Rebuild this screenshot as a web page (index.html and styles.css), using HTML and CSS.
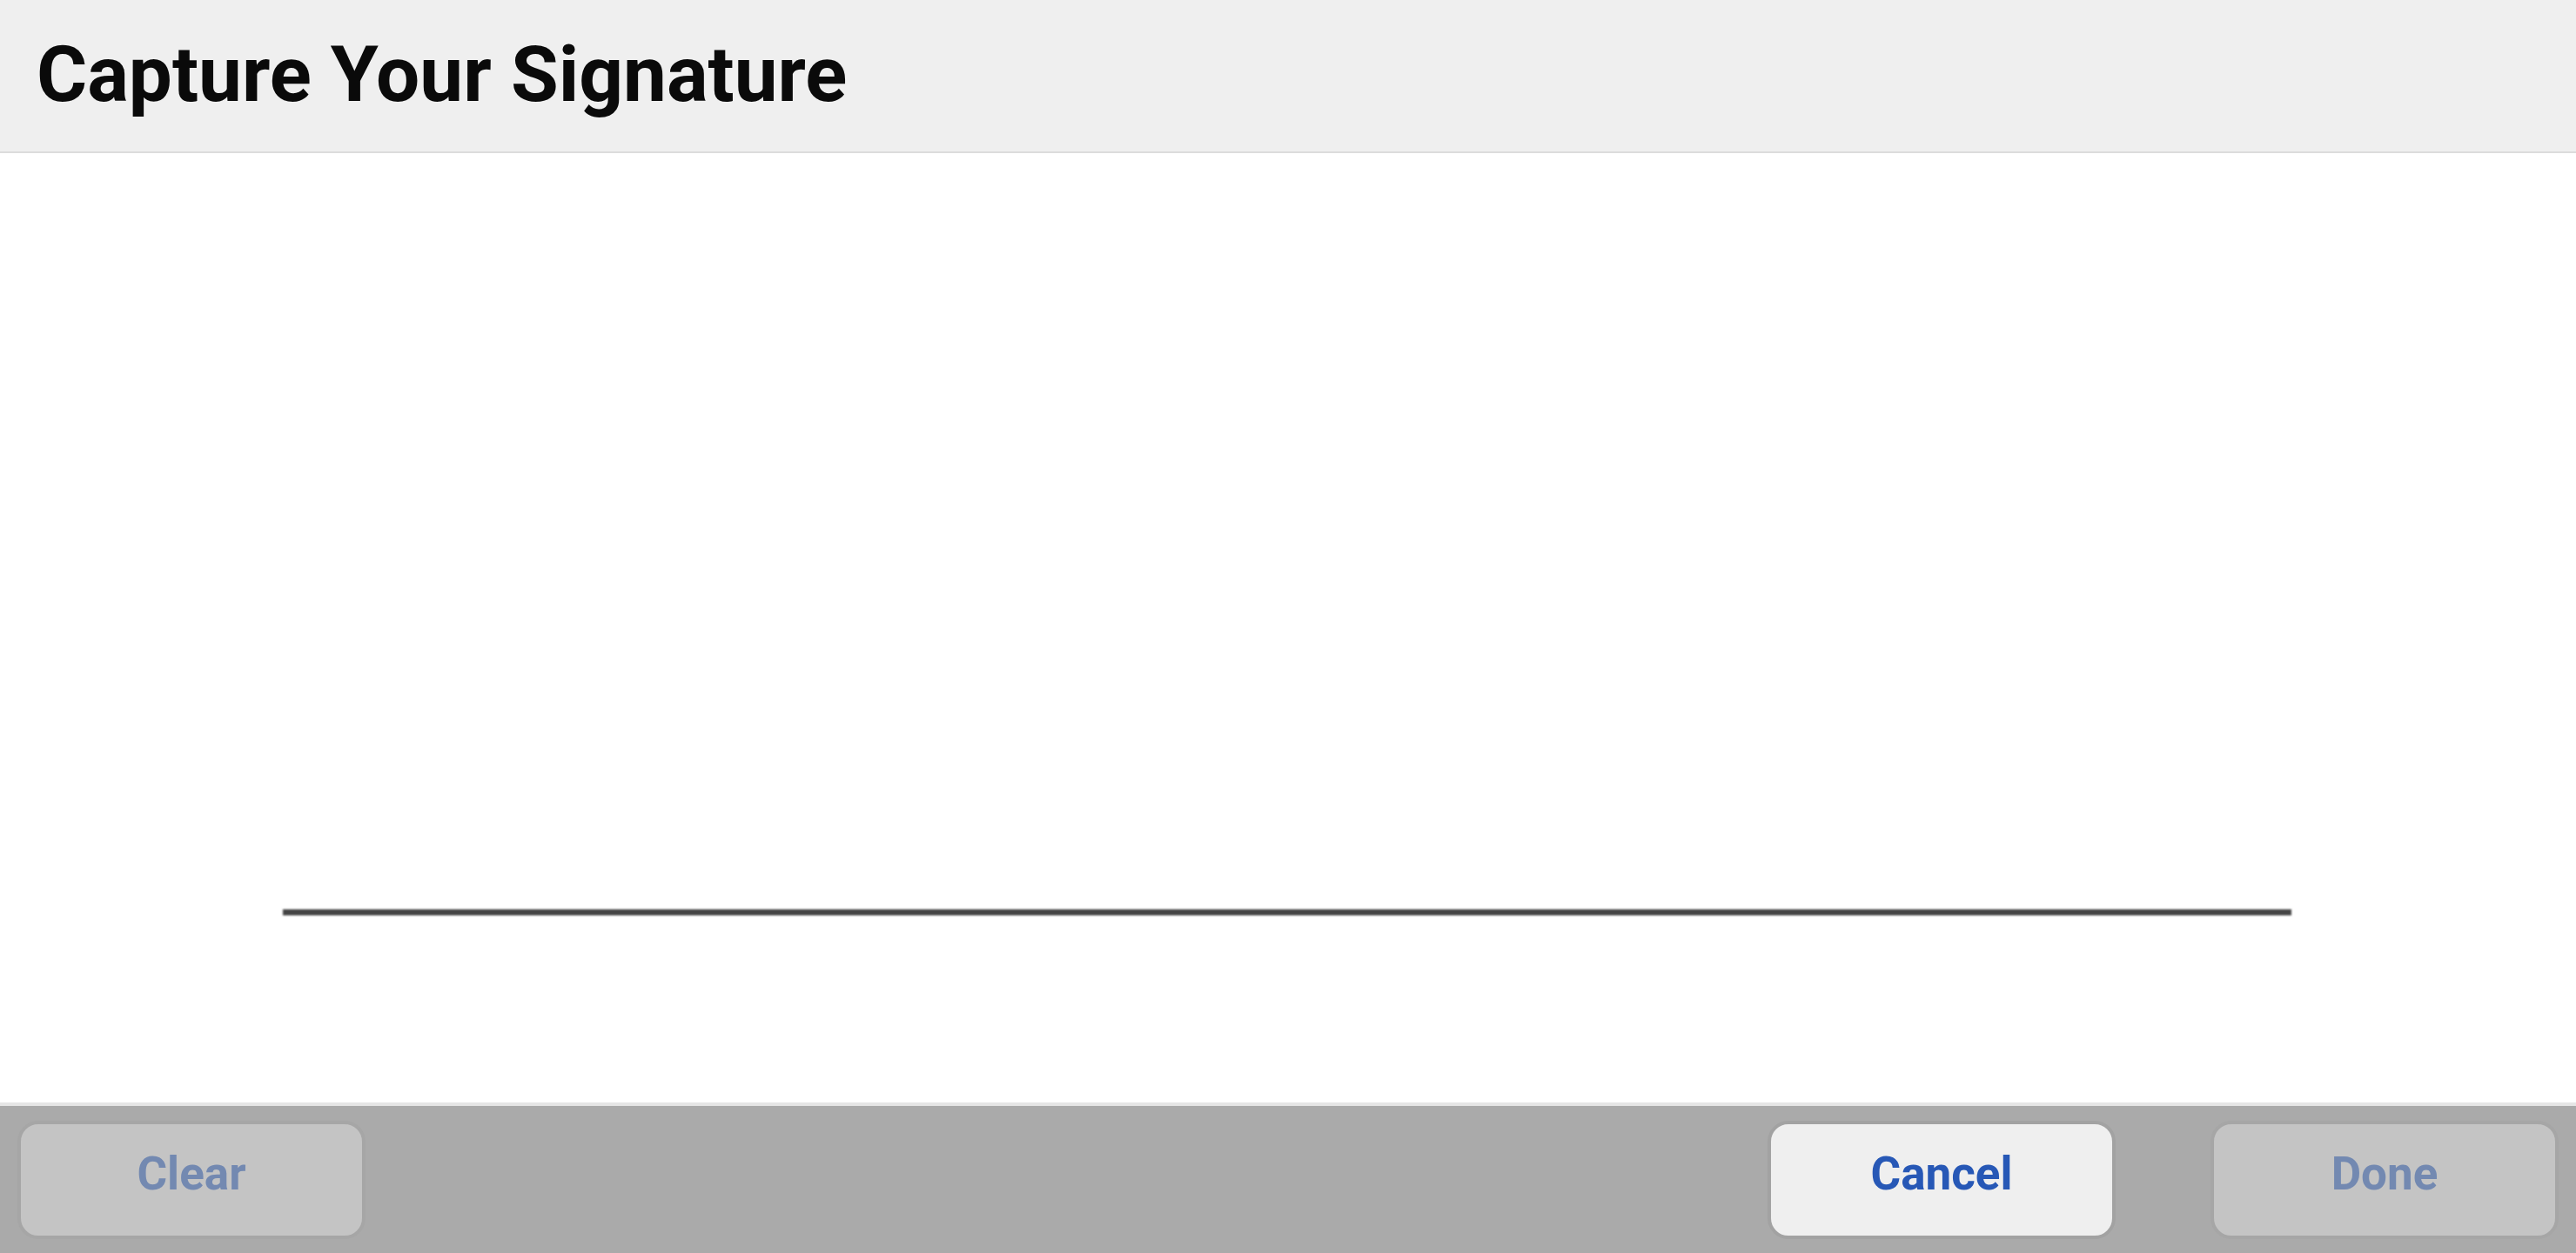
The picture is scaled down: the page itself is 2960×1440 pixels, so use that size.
FILE: index.html
```html
<!DOCTYPE html>
<html lang="en">
<head>
<meta charset="utf-8">
<title>Capture Your Signature</title>
<link rel="stylesheet" href="styles.css">
</head>
<body>
<div class="app">
  <header class="header">
    <h1 class="title">Capture Your Signature</h1>
  </header>
  <main class="canvas">
    <div class="sign-line"></div>
  </main>
  <footer class="footer">
    <button class="btn btn-disabled" type="button">Clear</button>
    <div class="spacer"></div>
    <button class="btn btn-active" type="button">Cancel</button>
    <button class="btn btn-disabled" type="button">Done</button>
  </footer>
</div>
</body>
</html>
```

FILE: styles.css
```css
* { box-sizing: border-box; }
html, body { margin: 0; padding: 0; }
body {
  width: 2960px;
  height: 1440px;
  overflow: hidden;
  background: #ffffff;
  font-family: Roboto, "Liberation Sans", Arial, sans-serif;
}
.app {
  display: flex;
  flex-direction: column;
  height: 1440px;
}
.header {
  height: 176px;
  flex: none;
  background: #efefef;
  border-bottom: 2px solid #dcdcdc;
  padding: 41px 0 0 42px;
}
.title {
  margin: 0;
  font-size: 89px;
  line-height: 1;
  font-weight: 700;
  color: #0a0a0a;
}
.canvas {
  flex: 1;
  display: flex;
  flex-direction: column;
  justify-content: flex-end;
  padding: 0 327px 215px 325px;
  background: #ffffff;
}
.sign-line {
  height: 7px;
  background: #444444;
  filter: blur(1px);
}
.footer {
  height: 173px;
  flex: none;
  background: #aaaaaa;
  border-top: 4px solid #e6e6e6;
  display: flex;
  align-items: flex-start;
  padding: 17px 20px 0 20px;
  gap: 109px;
}
.spacer { flex: 1; }
.btn {
  width: 400px;
  height: 136px;
  border-radius: 24px;
  border: 4px solid #a6a6a6;
  font-family: Roboto, "Liberation Sans", Arial, sans-serif;
  font-size: 53px;
  line-height: 1;
  font-weight: 700;
  padding: 0 0 14px 0;
  display: flex;
  align-items: center;
  justify-content: center;
  cursor: pointer;
}
.btn-disabled {
  background: #c4c4c4;
  color: #7389b1;
}
.btn-active {
  background: #efefef;
  border-color: #a2a2a2;
  color: #2758b6;
}
```
